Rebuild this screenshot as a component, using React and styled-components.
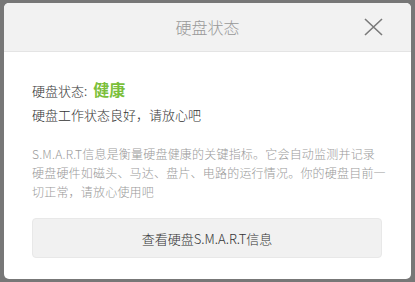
import styled, { createGlobalStyle } from "styled-components";

const Global = createGlobalStyle`
  html, body {
    margin: 0;
    padding: 0;
    background: #777777;
  }
  body {
    font-family: "Noto Sans CJK SC", "Liberation Sans", sans-serif;
    font-weight: 300;
  }
`;

const Backdrop = styled.div`
  width: 415px;
  height: 282px;
  box-sizing: border-box;
  padding: 3px 4px 3px 4px;
  background: #777777;
  display: flex;
`;

const Dialog = styled.div`
  flex: 1;
  display: flex;
  flex-direction: column;
  background: #ffffff;
  border-radius: 5px;
  overflow: hidden;
`;

const Header = styled.div`
  height: 48px;
  flex-shrink: 0;
  background: #f2f2f2;
  border-bottom: 1px solid #e4e4e4;
  display: flex;
  align-items: center;
  justify-content: center;
  position: relative;
`;

const Title = styled.div`
  font-size: 16px;
  color: #999999;
  line-height: 20px;
`;

const Close = styled.button`
  position: absolute;
  right: 28px;
  top: 14px;
  width: 20px;
  height: 20px;
  padding: 0;
  border: 0;
  background: none;
  display: flex;
  align-items: center;
  justify-content: center;
`;

const Body = styled.div`
  flex: 1;
  display: flex;
  flex-direction: column;
  padding: 25px 29px 0 28px;
`;

const StatusLine = styled.div`
  font-size: 13px;
  line-height: 24px;
  color: #333333;
  white-space: nowrap;
`;

const Healthy = styled.span`
  font-size: 16px;
  font-weight: bold;
  color: #7bbf3a;
  margin-left: 6px;
`;

const Note = styled.p`
  margin: 17px 0 0 0;
  font-size: 12px;
  line-height: 19px;
  letter-spacing: 0.2px;
  color: #9a9a9a;
  white-space: nowrap;
`;

const Action = styled.button`
  margin-top: 17px;
  height: 40px;
  width: 100%;
  box-sizing: border-box;
  border: 1px solid #e8e8e8;
  border-radius: 4px;
  background: #f1f1f1;
  font-family: inherit;
  font-weight: 300;
  font-size: 13px;
  color: #333333;
  cursor: pointer;
`;

export default function App() {
  return (
    <>
      <Global />
      <Backdrop>
        <Dialog>
          <Header>
            <Title>硬盘状态</Title>
            <Close aria-label="关闭">
              <svg width="19" height="18" viewBox="0 0 19 18">
                <path d="M1 1 L18 17 M18 1 L1 17" stroke="#7a7a7a" strokeWidth="1.6" fill="none" />
              </svg>
            </Close>
          </Header>
          <Body>
            <StatusLine>
              硬盘状态:<Healthy>健康</Healthy>
            </StatusLine>
            <StatusLine>硬盘工作状态良好，请放心吧</StatusLine>
            <Note>
              S.M.A.R.T信息是衡量硬盘健康的关键指标。它会自动监测并记录
              <br />
              硬盘硬件如磁头、马达、盘片、电路的运行情况。你的硬盘目前一
              <br />
              切正常，请放心使用吧
            </Note>
            <Action>查看硬盘S.M.A.R.T信息</Action>
          </Body>
        </Dialog>
      </Backdrop>
    </>
  );
}
